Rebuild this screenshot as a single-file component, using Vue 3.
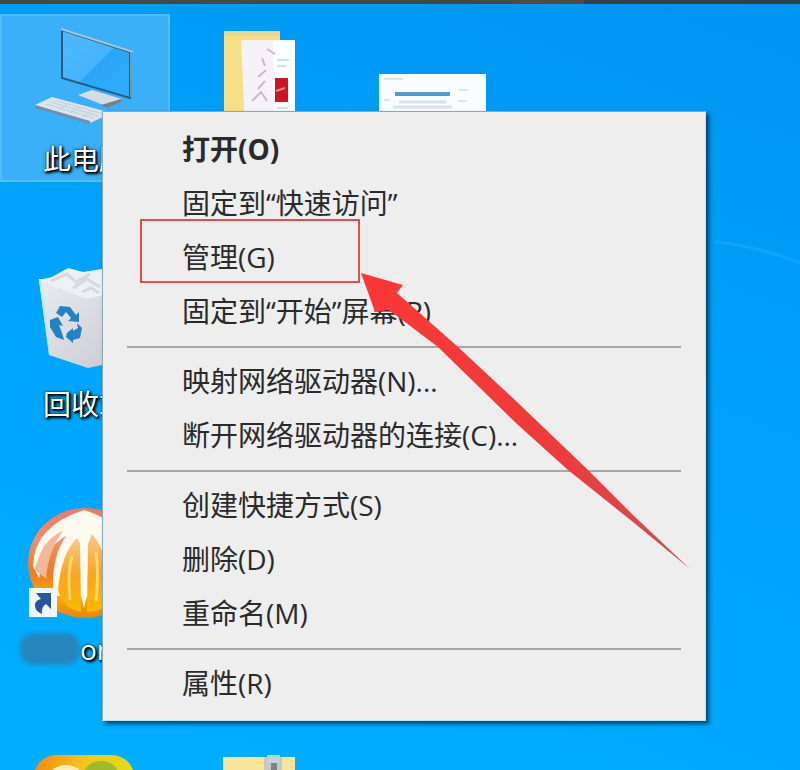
<script setup>
import { ref } from "vue"

// Menu groups, a divider is drawn between them
const groups = ref([
  [
    { text: "打开(O)", main: true },
    { text: "固定到“快速访问”" },
    { text: "管理(G)" },
    { text: "固定到“开始”屏幕(P)" }
  ],
  [
    { text: "映射网络驱动器(N)..." },
    { text: "断开网络驱动器的连接(C)..." }
  ],
  [
    { text: "创建快捷方式(S)" },
    { text: "删除(D)" },
    { text: "重命名(M)" }
  ],
  [
    { text: "属性(R)" }
  ]
])
</script>

<template>
  <div class="desktop">
    <div class="top-strip"></div>

    <!-- Wallpaper light line -->
    <svg class="wallpaper" width="100" height="40" viewBox="0 0 100 40">
      <path d="M2 4 Q50 8 100 30" fill="none" stroke="#12a4fd" stroke-width="3" />
    </svg>

    <!-- Desktop icons -->
    <ul class="icons">
      <li class="tile selected">
        <svg viewBox="0 0 170 128">
          <defs>
            <linearGradient id="screen" x1="0" y1="0" x2="1" y2="1">
              <stop offset="0" stop-color="#4fb9fb" />
              <stop offset="0.5" stop-color="#46b4fb" />
              <stop offset="0.52" stop-color="#2ba7f9" />
              <stop offset="1" stop-color="#2fabfa" />
            </linearGradient>
          </defs>
          <path d="M78 81 L92 76 L122 85 L106 92 Z" fill="#d5dce4" />
          <path d="M101 91 L121 85 L121 88 L107 94 Z" fill="#70828f" />
          <path d="M62 16 L130 38 L130 84 L62 64 Z" fill="url(#screen)" stroke="#275d83" stroke-width="2" />
          <path d="M61 15 L133 38" stroke="#a3c5d6" stroke-width="2" />
          <path d="M131 38 V83" stroke="#7798a8" stroke-width="2" />
          <path d="M35 91 L52 83 L112 99 L90 109 Z" fill="#dce4eb" />
          <path d="M35 91 L90 107 L90 110 L35 94 Z" fill="#6e91ab" />
          <path d="M46 90 L94 104 M51 88 L99 102 M57 87 L104 100 M58 96 L67 90 M70 99 L80 93 M82 103 L91 97" stroke="#c6cfd8" stroke-width="1" />
        </svg>
        <span class="label">此电脑</span>
      </li>
      <li class="tile">
        <svg viewBox="0 0 170 128">
          <path d="M51 17 H107 V114 H51 Z" fill="#f7df88" />
          <path d="M51 17 H107 V22 H51 Z" fill="#e9d795" />
          <path d="M68 26 H122 V114 H72 Z" fill="#f6f3f6" />
          <path d="M100 27 H122 V114 H100 Z" fill="#fdfeff" />
          <path d="M102 64 H115 V88 H102 Z" fill="#cc1523" />
          <path d="M103 77 L112 74" stroke="#ee8289" stroke-width="2" />
          <path d="M94 35 L102 40 M89 44 L92 52 M85 63 L93 56 M92 67 L85 75 M79 87 L88 78 L94 87" fill="none" stroke="#c2bec8" stroke-width="2" />
          <path d="M104 46 H116 M104 52 H113 M104 94 H115" stroke="#cbe6e5" stroke-width="2" />
        </svg>
      </li>
      <li class="tile">
        <svg viewBox="0 0 170 128">
          <path d="M33 60 H140 V128 H33 Z" fill="#f9fdff" />
          <path d="M38 65 H57 M38 86 H44 M113 76 H122 M112 87 H121" stroke="#dbe5ea" stroke-width="2" />
          <path d="M49 80 H104" stroke="#5b98cb" stroke-width="4" />
          <path d="M53 88 H100 M47 93 H106" stroke="#dbe1f2" stroke-width="3" />
        </svg>
      </li>

      <li class="tile">
        <svg viewBox="0 0 170 128">
          <defs>
            <linearGradient id="bin" x1="0" y1="0" x2="1" y2="1">
              <stop offset="0" stop-color="#e9edf0" />
              <stop offset="1" stop-color="#c7c8cf" />
            </linearGradient>
          </defs>
          <path d="M39 20 L130 26 L116 103 L88 109 L49 96 Z" fill="url(#bin)" />
          <path d="M39 21 L52 18 L68 9 L83 13 L102 10 L130 26 L100 37 L86 40 Z" fill="#eef1f3" />
          <path d="M51 22 L67 15 L76 23 L90 15 M73 29 L87 20 L100 28 M82 33 L91 29 L99 34" fill="none" stroke="#d3dade" stroke-width="3" />
          <path d="M40 22 L50 95" stroke="#bfe6fa" stroke-width="2" />
          <g fill="#2482c4">
            <path d="M56 54 L60 47 L70 48 L76 56 L79 53 L79 63 L68 62 L71 59 L66 53 L62 58 Z" />
            <path d="M50 61 L58 58 L63 67 L59 66 L62 74 L64 81 L56 78 L50 68 Z" />
            <path d="M67 74 L73 69 L73 72 L78 69 L77 64 L82 69 L80 79 L73 81 L73 84 L66 78 Z" />
          </g>
        </svg>
        <span class="label">回收站</span>
      </li>
      <li class="tile"></li>
      <li class="tile"></li>

      <li class="tile">
        <svg viewBox="0 0 170 128">
          <defs>
            <linearGradient id="shell" x1="0" y1="0" x2="0" y2="1">
              <stop offset="0" stop-color="#ec7a66" />
              <stop offset="0.3" stop-color="#f0906a" />
              <stop offset="0.6" stop-color="#ee7a24" />
              <stop offset="0.8" stop-color="#ffab00" />
              <stop offset="1" stop-color="#df8711" />
            </linearGradient>
            <linearGradient id="core" x1="0" y1="0" x2="0" y2="1">
              <stop offset="0" stop-color="#f9c98a" />
              <stop offset="0.5" stop-color="#f6a623" />
              <stop offset="1" stop-color="#ffb800" />
            </linearGradient>
          </defs>
          <ellipse cx="85" cy="59" rx="57" ry="55" fill="url(#shell)" />
          <path d="M33 62 Q34 22 84 6 Q136 22 138 64 L112 90 L87 92 L84 104 L81 92 L58 92 L53 84 Q52 52 66 32 Q44 44 39 74 Z" fill="#fffaf0" />
          <path d="M35 66 Q41 36 63 27 Q48 47 46 75 Z" fill="#f5b79a" />
          <path d="M77 34 Q61 50 58 86 Q62 104 81 108 L80 40 Z" fill="url(#core)" />
          <path d="M88 40 L87 108 Q104 108 112 94 Q110 52 92 30 Z" fill="url(#core)" />
          <path d="M72 52 Q67 70 70 96 M96 48 Q99 68 96 97" fill="none" stroke="#ffd56a" stroke-width="3" />
          <path d="M29 84 H57 V113 H29 Z" fill="#f3f6fb" />
          <path d="M36 89 H51 V105 L46 100 Q41 103 42 110 Q34 107 35 100 Q36 96 41 95 Z" fill="#2b5799" />
        </svg>
        <span class="label cut"><span class="smudge"></span>on</span>
      </li>
      <li class="tile"></li>
      <li class="tile"></li>

      <li class="tile">
        <svg viewBox="0 0 170 128">
          <defs>
            <linearGradient id="fruit" x1="0" y1="0" x2="1" y2="0">
              <stop offset="0" stop-color="#f58a13" />
              <stop offset="0.5" stop-color="#f2c61c" />
              <stop offset="1" stop-color="#e2dc18" />
            </linearGradient>
          </defs>
          <rect x="34" y="6" width="100" height="100" rx="22" fill="url(#fruit)" />
          <ellipse cx="66" cy="28" rx="17" ry="12" fill="#ffefb0" />
          <ellipse cx="101" cy="25" rx="17" ry="13" fill="#a0b92c" />
        </svg>
      </li>
      <li class="tile">
        <svg viewBox="0 0 170 128">
          <path d="M50 8 H122 V100 H50 Z" fill="#f8e59b" />
          <path d="M91 8 H109 V40 H91 Z" fill="#c9c8bd" />
          <path d="M94 6 H107 V14 H94 Z" fill="#bfd3e4" />
          <path d="M98 14 H104 V40 H98 Z" fill="#7e8289" />
        </svg>
      </li>
    </ul>

    <!-- Context menu -->
    <nav class="menu">
      <ul v-for="(group, index) in groups" :key="index" class="group">
        <li v-for="item in group" :key="item.text">
          <button type="button" :class="{ main: item.main }">{{ item.text }}</button>
        </li>
      </ul>
    </nav>

    <!-- Red frame and arrow -->
    <svg class="marks" width="560" height="360" viewBox="140 218 560 360">
      <defs>
        <linearGradient id="arrow" x1="0" y1="0" x2="1" y2="1">
          <stop offset="0" stop-color="#fb3836" />
          <stop offset="0.6" stop-color="#ec3c3b" />
          <stop offset="1" stop-color="#cc5055" />
        </linearGradient>
      </defs>
      <rect x="141" y="220" width="218" height="62" fill="none" stroke="#e0504e" stroke-width="2" />
      <path d="M361 273 L403 285 L397 293 L458 347 L517 402 L587 469 L633 515 L690 569 L633 522 L568 470 L517 424 L438 347 L401 319 L388 310 L375 312 Z" fill="url(#arrow)" />
    </svg>
  </div>
</template>

<style>
body {
  margin: 0;
}
</style>

<style scoped>
.desktop {
  position: relative;
  height: 100vh;
  overflow: hidden;
  background: linear-gradient(200deg, #0094ef 0%, #009cf6 25%, #00a4fc 55%, #00adff 90%);
  font-family: "Open Sans", "Noto Sans CJK SC", sans-serif;
}

.top-strip {
  height: 4px;
  background: linear-gradient(to right, #45494a 0 64%, #514b48 64% 73%, #2d4345 73%);
}

.wallpaper {
  position: absolute;
  top: 238px;
  left: 712px;
}

ul {
  list-style: none;
  margin: 0;
  padding: 0;
}

.icons {
  display: grid;
  grid-template-columns: repeat(3, 170px);
  grid-auto-rows: 168px;
  gap: 77px 3px;
  padding-top: 10px;
}

.tile {
  display: flex;
  flex-direction: column;
}
.tile svg {
  display: block;
  width: 170px;
  height: 128px;
}
.selected {
  background: #3baff8;
  box-shadow: inset 0 0 0 2px #55bcfb;
}

.label {
  line-height: 34px;
  font-size: 28px;
  text-align: center;
  color: #fff;
  text-shadow: 1px 1px 2px #000, 2px 2px 3px #000, 0 0 3px #123;
}
.cut {
  display: flex;
  align-items: center;
  padding-left: 20px;
}
.smudge {
  width: 60px;
  height: 32px;
  border-radius: 14px;
  background: #2586bd;
  filter: blur(2px);
}

.menu {
  position: absolute;
  top: 111px;
  left: 102px;
  width: 604px;
  box-sizing: border-box;
  padding: 11px 0 9px;
  background: #eeeeee;
  border: 1px solid #c5e4f3;
  border-top-color: #8aa9b8;
  border-left-color: #8aa9b8;
  box-shadow: 3px 3px 4px rgba(0, 30, 50, 0.7);
}

.group + .group::before {
  content: "";
  display: block;
  height: 2px;
  margin: 7px 24px;
  background: #a6a6a6;
}

.menu button {
  display: block;
  width: 100%;
  height: 54px;
  padding: 0 0 2px 79px;
  border: none;
  background: none;
  text-align: left;
  font-family: inherit;
  font-size: 28px;
  line-height: 52px;
  color: #2a2a2a;
  cursor: default;
}
.menu button:hover {
  background: #fff;
}
.menu .main {
  font-weight: bold;
}

.marks {
  position: absolute;
  top: 218px;
  left: 140px;
  pointer-events: none;
}
</style>
